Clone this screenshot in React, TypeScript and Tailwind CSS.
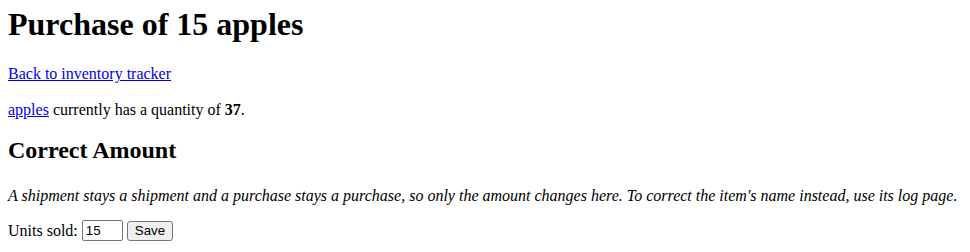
import React from "react";

const serif = { fontFamily: '"Liberation Serif", "Times New Roman", serif' };

export default function App() {
  return (
    <div
      className="bg-white px-2 pt-[6px] text-[16px] leading-[normal] text-black"
      style={serif}
    >
      <h1 className="mb-[22px] text-[32px] font-bold leading-[normal]">
        Purchase of 15 apples
      </h1>
      <p className="mb-[18px]">
        <a href="#" className="text-[#0000ee] underline">
          Back to inventory tracker
        </a>
      </p>
      <p className="mb-[18px]">
        <a href="#" className="text-[#0000ee] underline">
          apples
        </a>{" "}
        currently has a quantity of <b>37</b>.
      </p>
      <h2 className="mb-[23px] text-[24px] font-bold leading-[normal]">
        Correct Amount
      </h2>
      <p className="mb-[15px] italic">
        A shipment stays a shipment and a purchase stays a purchase, so only the
        amount changes here. To correct the item's name instead, use its log
        page.
      </p>
      <form className="flex items-center" onSubmit={(e) => e.preventDefault()}>
        <label htmlFor="units">Units sold:</label>
        <input
          id="units"
          defaultValue="15"
          className="ml-1 h-[21px] w-[41px] rounded-[2px] border border-[#767676] px-[3px] text-[13.33px] font-['Liberation_Sans',Arial,sans-serif]"
        />
        <button
          type="submit"
          className="ml-1 h-[20px] rounded-[3px] border border-[#767676] bg-[#efefef] px-[7px] text-[13.33px] font-['Liberation_Sans',Arial,sans-serif]"
        >
          Save
        </button>
      </form>
    </div>
  );
}
